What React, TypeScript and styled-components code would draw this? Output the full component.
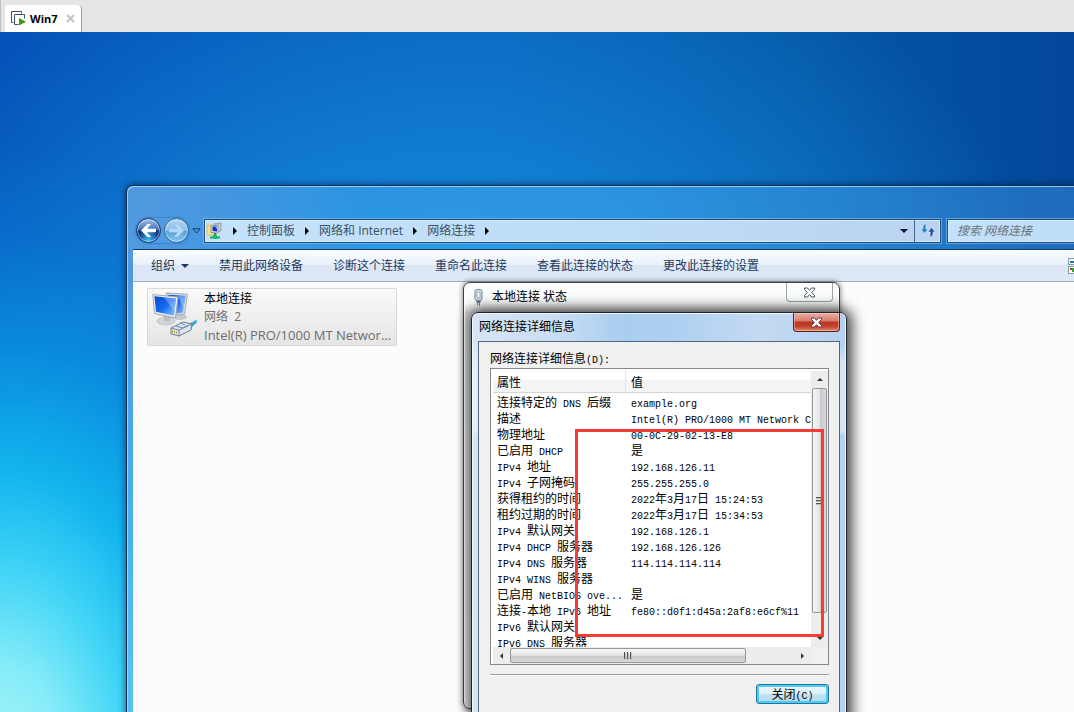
import React from "react";
import styled, { createGlobalStyle, css } from "styled-components";

const UI_FONT = '"Open Sans", "Noto Sans CJK SC", sans-serif';
const LIST_FONT = '"Noto Sans CJK SC", sans-serif';

const GlobalStyle = createGlobalStyle`
  *, *::before, *::after { box-sizing: border-box; }
  body { margin: 0; font: 12px/16px ${UI_FONT}; color: #000; }
  button { font: inherit; color: inherit; padding: 0; border: 0; background: none; cursor: default; }
  h1, h2 { margin: 0; font-size: 12px; font-weight: 400; }
  svg { flex: none; }
`;

const Page = styled.div`
  position: relative;
  display: flex;
  flex-direction: column;
  min-height: 100vh;
  overflow: hidden;
`;

const TabBar = styled.header`
  display: flex;
  align-items: flex-end;
  height: 32px;
  padding-left: 4px;
  background: #e4e5e7;
  border-left: 1px solid #c0c0c2;
`;

const Tab = styled.div`
  display: flex;
  align-items: center;
  height: 27px;
  padding: 0 6px;
  background: #fff;
  border-right: 1px solid #a2a3a5;
  border-radius: 3px 4px 0 0;
  font: bold 11px/16px "Open Sans", sans-serif;
`;

const TabLabel = styled.span`
  margin: 0 8px 0 4px;
`;

const TabClose = styled.button`
  display: flex;
`;

const Desktop = styled.main`
  position: relative;
  flex: 1;
  overflow: hidden;
  background:
    radial-gradient(ellipse 400px 620px at 0% 108%, #a8f5f9 0%, #86ecf8 16%, #40d4f6 32%, rgba(18, 184, 240, 0.95) 48%, rgba(8, 150, 228, 0.7) 68%, rgba(6, 120, 214, 0.35) 86%, rgba(4, 110, 205, 0) 100%),
    radial-gradient(ellipse 640px 480px at 40% 50%, #1d96e6 0%, rgba(20, 136, 218, 0.75) 45%, rgba(8, 100, 190, 0) 100%),
    linear-gradient(90deg, #034eb6 0%, #075cb6 45%, #0557a6 75%, #03479a 100%);
`;

const Explorer = styled.section`
  position: absolute;
  top: 153px;
  left: 126px;
  right: -100px;
  bottom: -40px;
  display: flex;
  flex-direction: column;
  padding: 0 6px;
  border: 1px solid #0c2c4c;
  border-radius: 7px 7px 0 0;
  background: linear-gradient(100deg, rgba(128, 180, 238, 0.6) 0, rgba(118, 178, 238, 0.52) 90px, rgba(66, 168, 240, 0.5) 240px, rgba(70, 170, 240, 0.5) 45%, rgba(50, 130, 210, 0.5) 100%);
  box-shadow: inset 1px 1px 0 rgba(160, 220, 255, 0.85), 0 0 6px 1px rgba(0, 20, 60, 0.55);
`;

const NavBar = styled.nav`
  display: flex;
  align-items: center;
  height: 63px;
  padding: 26px 0 0 3px;
`;

const NavButtons = styled.div`
  display: flex;
  align-items: center;
  gap: 3px;
  border-radius: 14px;
  background: rgba(90, 160, 220, 0.35);
  box-shadow: 0 0 2px rgba(10, 60, 120, 0.7);
`;

const RoundButton = styled.button<{ $active?: boolean }>`
  display: flex;
  align-items: center;
  justify-content: center;
  width: 25px;
  height: 25px;
  border: 1px solid ${(p) => (p.$active ? "#12386e" : "#2f6ca6")};
  border-radius: 50%;
  background: ${(p) =>
    p.$active
      ? "radial-gradient(ellipse at 50% 100%, #3cc0f4 0%, transparent 55%), linear-gradient(#a6c4ea 0%, #476fb4 46%, #0d2f78 52%, #1a5cb4 100%)"
      : "linear-gradient(#b4d6f2 0%, #8cbee6 48%, #5a9fd6 54%, #84caf2 100%)"};
  box-shadow: inset 0 0 0 1px rgba(255, 255, 255, 0.5);
`;

const HistoryButton = styled.button`
  display: flex;
  margin: 0 3px;
`;

const glassField = css`
  display: flex;
  align-items: center;
  height: 24px;
  border: 1px solid #1f4c7c;
  background: linear-gradient(90deg, #c4e2f9, #bfdcf6 60%, #bbd3ee);
  box-shadow: inset 0 0 0 1px rgba(225, 243, 255, 0.7), 0 0 0 1px rgba(130, 195, 245, 0.6);
`;

const AddressBar = styled.div`
  ${glassField}
  flex: 1;
  padding-left: 1px;
  color: #3c5064;
`;

const Crumb = styled.a`
  color: inherit;
  text-decoration: none;
  white-space: nowrap;
`;

const CrumbArrow = styled.span`
  display: flex;
  justify-content: center;
  width: 24px;
`;

const AddressTail = styled.button`
  display: flex;
  align-items: center;
  justify-content: center;
  width: 20px;
  height: 22px;
  margin-left: auto;
`;

const RefreshButton = styled.button`
  display: flex;
  align-items: center;
  justify-content: center;
  width: 26px;
  height: 22px;
  border-left: 1px solid #41688e;
`;

const SearchBox = styled.input`
  ${glassField}
  width: 220px;
  margin-left: 6px;
  padding: 0 9px;
  border-radius: 0;
  font: italic 12px/16px ${UI_FONT};
  outline: none;
  &::placeholder { color: #6b7680; opacity: 1; }
`;

const CommandBar = styled.div`
  display: flex;
  align-items: center;
  gap: 30px;
  height: 33px;
  padding: 0 70px 0 18px;
  border-top: 1px solid #123c66;
  border-bottom: 1px solid #a0afc3;
  background: linear-gradient(#fbfdff 0%, #e8f1fb 47%, #dce6f4 50%, #dde7f5 100%);
  color: #1e395b;
`;

const Command = styled.button`
  display: flex;
  align-items: center;
  gap: 6px;
  white-space: nowrap;
`;

const ViewButton = styled(Command)`
  margin-left: auto;
`;

const FolderView = styled.div`
  flex: 1;
  padding: 6px 14px;
  background: #fcfcfc;
`;

const ConnectionTile = styled.article`
  display: flex;
  gap: 6px;
  width: 250px;
  height: 58px;
  padding: 1px 4px;
  border: 1px solid #d9d9d9;
  border-radius: 2px;
  background: linear-gradient(#f9f9f9, #e5e5e5);
`;

const TileText = styled.div`
  display: flex;
  flex-direction: column;
  line-height: 18px;
  color: #6d6d6d;
  white-space: pre;
`;

const TileName = styled.strong`
  font-weight: 400;
  color: #000;
`;

const TileDevice = styled.span`
  font-size: 13px;
`;

const StatusWindow = styled.section`
  position: absolute;
  top: 250px;
  left: 463px;
  width: 377px;
  height: 427px;
  border: 1px solid #3c4043;
  border-radius: 7px;
  background: linear-gradient(#fdfefe 0, #f8faf9 20px, #d2d5d4 30px, #e3e5e5 100%);
  box-shadow: inset 0 0 0 1px #fff, 0 0 5px 1px rgba(0, 0, 0, 0.4);
`;

const StatusTitle = styled.div`
  display: flex;
  justify-content: space-between;
  padding-left: 10px;
`;

const Caption = styled.h1`
  display: flex;
  align-items: center;
  gap: 9px;
  height: 28px;
`;

const CloseButton = styled.button<{ $red?: boolean }>`
  display: flex;
  align-items: center;
  justify-content: center;
  width: 47px;
  height: 19px;
  margin-right: 6px;
  border: 1px solid ${(p) => (p.$red ? "#5a1f22" : "#9da2a5")};
  border-top: 0;
  border-radius: 0 0 4px 4px;
  ${(p) =>
    p.$red &&
    css`
      background: linear-gradient(#e9b0a4 0%, #d6796a 45%, #bb3320 50%, #c14430 75%, #e08a6c 100%);
      box-shadow: inset 0 0 0 1px rgba(255, 220, 210, 0.45);
    `}
`;

const DetailsWindow = styled.section`
  position: absolute;
  top: 280px;
  left: 471px;
  width: 376px;
  padding: 0 6px 7px;
  border: 1px solid #1c232b;
  border-radius: 7px;
  background:
    linear-gradient(transparent 0, transparent 30px, rgba(236, 243, 250, 0.6) 50px, rgba(236, 243, 250, 0.6) 118px, transparent 122px),
    linear-gradient(90deg, #d7e5f5 0, #c8dcf2 90px, #a8cef0 150px, #aed0f0 200px, #c4daf3 290px, #b4d0ee 100%);
  box-shadow: inset 0 0 0 1px rgba(245, 250, 255, 0.9), 2px 0 14px 3px rgba(0, 0, 0, 0.75);
`;

const DetailsTitle = styled.div`
  display: flex;
  justify-content: space-between;
  height: 28px;
  margin-right: -6px;
  padding-left: 1px;
`;

const DetailsBody = styled.div`
  display: flex;
  flex-direction: column;
  padding: 8px 10px 13px 11px;
  border: 1px solid #55677d;
  background: #f0f0f0;
`;

const ListLabel = styled.h2`
  height: 18px;
  line-height: 18px;
`;

const ListBox = styled.div`
  display: grid;
  grid-template-columns: 1fr 17px;
  grid-template-rows: 276px 17px;
  height: 297px;
  padding: 2px 0 0 2px;
  border: 1px solid #828790;
  background: #fff;
  font-family: ${LIST_FONT};
`;

const TableViewport = styled.div`
  overflow: hidden;
`;

const DetailTable = styled.table`
  width: 100%;
  table-layout: fixed;
  border-collapse: separate;
  border-spacing: 0;

  th {
    height: 22px;
    padding: 0 4px;
    border-bottom: 1px solid #d5d5d5;
    background: linear-gradient(#fff 40%, #f3f4f6 45%, #f3f4f6 100%);
    font-weight: 400;
    text-align: left;
  }
  th:first-child { width: 133px; border-right: 1px solid #e1e3e6; }
  td {
    height: 16px;
    padding: 0 0 0 4px;
    line-height: 16px;
    white-space: pre;
    overflow: hidden;
  }
  td + td, th + th { padding-left: 5px; }
  tbody tr:first-child td { height: 17px; padding-top: 1px; }
`;

/* The short line box keeps a smaller Latin run from making its row taller. */
const Latin = styled.span`
  font: 10px/10px "Liberation Mono", monospace;
`;

const VerticalScroll = styled.div`
  display: flex;
  flex-direction: column;
  align-items: center;
  background: #ededee;
`;

const HorizontalScroll = styled.div`
  display: flex;
  align-items: center;
  background: #ededee;
`;

const ScrollEnd = styled.button`
  display: flex;
  align-items: center;
  justify-content: center;
  width: 17px;
  height: 17px;
`;

const ScrollCorner = styled.div`
  background: #f0f0f0;
`;

const VerticalThumb = styled.div`
  display: flex;
  align-items: center;
  justify-content: center;
  width: 15px;
  height: 225px;
  margin-bottom: auto;
  border: 1px solid #979797;
  border-radius: 2px;
  background: linear-gradient(90deg, #f5f5f5 0%, #e6e6e8 50%, #c9cacd 55%, #d8d8da 100%);
`;

const HorizontalThumb = styled.div`
  display: flex;
  align-items: center;
  justify-content: center;
  width: 236px;
  height: 15px;
  margin-right: auto;
  border: 1px solid #979797;
  border-radius: 2px;
  background: linear-gradient(#f5f5f5 0%, #e6e6e8 48%, #c9cacd 54%, #d8d8da 100%);
`;

const Divider = styled.hr`
  width: 100%;
  height: 2px;
  margin: 9px 0 8px;
  border: 0;
  border-top: 1px solid #a0a0a0;
  border-bottom: 1px solid #fff;
`;

const DefaultButton = styled.button`
  align-self: flex-end;
  width: 73px;
  height: 20px;
  border: 1px solid #2f6f9c;
  border-radius: 3px;
  background: linear-gradient(#eef7fc 0%, #def0f9 48%, #c2e2f3 52%, #b4dbef 100%);
  box-shadow: inset 0 0 0 2px #48cdf5;
  font-family: ${LIST_FONT};
  line-height: 16px;
`;

const Highlight = styled.div`
  position: absolute;
  top: 397px;
  left: 575px;
  width: 249px;
  height: 208px;
  border: 3px solid #f93a37;
  pointer-events: none;
`;

function Mixed({ children }: { children: string }) {
  const runs = children.match(/[\u4e00-\u9fff]+|[^\u4e00-\u9fff]+/g) ?? [];
  return (
    <>
      {runs.map((run, i) => (/[\u4e00-\u9fff]/.test(run) ? run : <Latin key={i}>{run}</Latin>))}
    </>
  );
}

function Triangle({ dir, color = "#000", size = 4 }: { dir: "up" | "down" | "left" | "right"; color?: string; size?: number }) {
  const s = size;
  const shapes = {
    down: `0,0 ${2 * s},0 ${s},${s}`,
    up: `0,${s} ${2 * s},${s} ${s},0`,
    right: `0,0 ${s},${s} 0,${2 * s}`,
    left: `${s},0 0,${s} ${s},${2 * s}`,
  };
  const vertical = dir === "up" || dir === "down";
  return (
    <svg width={vertical ? 2 * s : s} height={vertical ? s : 2 * s} aria-hidden="true">
      <polygon points={shapes[dir]} fill={color} />
    </svg>
  );
}

function Arrow({ flip, faded }: { flip?: boolean; faded?: boolean }) {
  return (
    <svg width="19" height="17" viewBox="0 0 19 17" aria-hidden="true">
      <path
        d={flip ? "M17 8.500 10.500 2H7l4 4.800H2v3.400h9L7 15h3.500z" : "M2 8.500 8.500 2H12L8 6.800h9v3.400H8l4 4.800H8.500z"}
        fill={faded ? "#b4dbf7" : "#fff"}
        stroke={faded ? "#94c6ea" : "none"}
        strokeWidth=".5"
      />
    </svg>
  );
}

function Cross({ light }: { light?: boolean }) {
  return (
    <svg width="13" height="11" viewBox="0 0 13 11" aria-hidden="true">
      <path
        d="M1.500 1h3l2 2.300L8.500 1h3v1.500L8.700 5.500l2.800 3V10h-3l-2-2.300L4.500 10h-3V8.500l2.800-3-2.800-3z"
        fill="#fff"
        stroke={light ? "#6b3a3c" : "#4d5260"}
        strokeLinejoin="round"
      />
    </svg>
  );
}

function Grip({ vertical }: { vertical?: boolean }) {
  return (
    <svg width="8" height="8" viewBox="0 0 8 8" aria-hidden="true">
      <path d={vertical ? "M0 .5h8M0 3.500h8M0 6.500h8" : "M.5 0v7M3.500 0v7M6.500 0v7"} stroke="#555" />
      <path d={vertical ? "M0 1.500h8M0 4.500h8M0 7.500h8" : "M1.500 1v7M4.500 1v7M7.500 1v7"} stroke="#bbb" />
    </svg>
  );
}

function MachineIcon() {
  return (
    <svg width="15" height="15" viewBox="0 0 15 15" fill="none" aria-hidden="true">
      <path d="M2.500 11.500H.5V.5h10v2" stroke="#3d5263" />
      <path d="M7.500 13.500H3.500v-10h10v4" stroke="#3d5263" />
      <path d="M8 7l7 3.800L8 14.500z" fill="#3f9a0a" />
    </svg>
  );
}

function NetworkFolderIcon() {
  return (
    <svg width="17" height="18" viewBox="0 0 17 18" aria-hidden="true">
      <path d="M1 3h5l1 1h3v9H1z" fill="#f1e08c" stroke="#d9bb52" strokeWidth=".8" />
      <path d="M8 2l7-1v8l-7 1z" fill="#c9d2dc" stroke="#7b8797" strokeWidth=".7" />
      <path d="M5 4l7-1v8l-7-.5z" fill="#dfe5ee" stroke="#68758a" strokeWidth=".7" />
      <path d="M6.500 4.800l4.500-.6v5.300l-4.500-.4z" fill="#1d2fc2" />
      <path d="M9 4.500l2-.3v3z" fill="#85a8f2" />
      <path d="M9 11v4M4 15.500h10" stroke="#16a85c" strokeWidth="2" />
      <rect x="7" y="13" width="4" height="4" fill="#10c070" />
    </svg>
  );
}

function ConnectionIcon() {
  return (
    <svg width="46" height="50" viewBox="0 0 46 50" aria-hidden="true">
      <defs>
        <linearGradient id="screen" x1="0" y1="0" x2="1" y2="1">
          <stop offset="0" stopColor="#0a45d0" />
          <stop offset=".5" stopColor="#1668f0" />
          <stop offset="1" stopColor="#8fc8fb" />
        </linearGradient>
      </defs>
      <ellipse cx="28" cy="27" rx="7" ry="3" fill="#c4c8cc" />
      <path d="M14 3l21.500 1.200-3 20-10 1z" fill="#dfe2e5" stroke="#a5a9ad" />
      <path d="M16 4.800l17.500 1-2.500 17-8 1z" fill="url(#screen)" />
      <path d="M26 5.400l7.500.4-2 14z" fill="#fff" opacity=".35" />
      <ellipse cx="14" cy="31" rx="9" ry="4" fill="#d2d5d8" stroke="#aeb2b6" strokeWidth=".6" />
      <path d="M12 25h7l-1 6h-6z" fill="#b9bdc2" />
      <path d="M.8 4.500L26 7l-2.500 21L2.500 23.500z" fill="#eceef0" stroke="#a5a9ad" />
      <path d="M2.500 6.300L24 8.500l-2 17.200L4 21.800z" fill="url(#screen)" />
      <path d="M12 7.300l12 1.200-1.500 13z" fill="#fff" opacity=".3" />
      <path d="M35 35l9.500-5 .5 2-6 6z" fill="#3ba7d6" stroke="#78c3e3" />
      <path d="M19 38l12-6 9 2-1 6-12 6-8-2z" fill="#dbe5ee" stroke="#687c99" />
      <path d="M19 38l8 2v6M27 40l13-6M24 36l7 2 5-3M28 33l5 2" fill="none" stroke="#7088aa" />
      <path d="M20.500 40v3M22.500 40.500v3M24.500 41v3" stroke="#b9a64a" />
    </svg>
  );
}

function PlugIcon() {
  return (
    <svg width="9" height="17" viewBox="0 0 9 17" aria-hidden="true">
      <rect x="1" y=".5" width="7" height="11" rx="2" fill="#d9e2ec" stroke="#76869a" />
      <rect x="3" y="3" width="3" height="6" fill="#f8fbff" stroke="#8494a8" strokeWidth=".8" />
      <path d="M2 12h5l-1 2H3z" fill="#5e7590" />
      <path d="M3.500 13v3M5.500 13v4" stroke="#259ac4" />
    </svg>
  );
}

function RefreshIcon() {
  return (
    <svg width="16" height="15" viewBox="0 0 16 15" aria-hidden="true">
      <path d="M6.500.8C3.500 1 2.500 3.500 2.800 6H.6l3.900 4.500L8.300 6H6C5.700 4 5.800 2.500 6.500.8z" fill="#2187cf" stroke="#eaf6ff" strokeWidth=".6" />
      <path d="M9.500 14.200c3-.2 4-2.700 3.700-5.200h2.200l-3.900-4.500L7.700 9H10c.3 2 .2 3.500-.5 5.200z" fill="#2a55a8" stroke="#eaf6ff" strokeWidth=".6" />
    </svg>
  );
}

function ViewsIcon() {
  return (
    <svg width="29" height="16" viewBox="0 0 29 16" aria-hidden="true">
      <rect x=".5" y=".5" width="9" height="6" fill="#fff" stroke="#8799ad" />
      <path d="M2 3h6v2H2z" fill="#2a78a0" />
      <rect x=".5" y="8.500" width="9" height="7" fill="#fff" stroke="#8799ad" />
      <path d="M2 10h2v2H2z" fill="#d03020" />
      <path d="M4 10h3v4H4z" fill="#35a030" />
    </svg>
  );
}

const crumbs = ["控制面板", "网络和 Internet", "网络连接"];
const commands = ["禁用此网络设备", "诊断这个连接", "重命名此连接", "查看此连接的状态", "更改此连接的设置"];
const details: [string, string][] = [
  ["连接特定的 DNS 后缀", "example.org"],
  ["描述", "Intel(R) PRO/1000 MT Network C"],
  ["物理地址", "00-0C-29-02-13-E8"],
  ["已启用 DHCP", "是"],
  ["IPv4 地址", "192.168.126.11"],
  ["IPv4 子网掩码", "255.255.255.0"],
  ["获得租约的时间", "2022年3月17日 15:24:53"],
  ["租约过期的时间", "2022年3月17日 15:34:53"],
  ["IPv4 默认网关", "192.168.126.1"],
  ["IPv4 DHCP 服务器", "192.168.126.126"],
  ["IPv4 DNS 服务器", "114.114.114.114"],
  ["IPv4 WINS 服务器", ""],
  ["已启用 NetBIOS ove...", "是"],
  ["连接-本地 IPv6 地址", "fe80::d0f1:d45a:2af8:e6cf%11"],
  ["IPv6 默认网关", ""],
  ["IPv6 DNS 服务器", ""],
];

function ExplorerWindow() {
  return (
    <Explorer aria-label="网络连接">
      <NavBar>
        <NavButtons>
          <RoundButton $active aria-label="后退"><Arrow /></RoundButton>
          <RoundButton aria-label="前进"><Arrow flip faded /></RoundButton>
        </NavButtons>
        <HistoryButton aria-label="最近的页面">
          <svg width="9" height="6" aria-hidden="true">
            <path d="M.8.8h7.400L4.500 5z" fill="#4aa0e0" stroke="#12385e" />
          </svg>
        </HistoryButton>
        <AddressBar>
          <NetworkFolderIcon />
          <CrumbArrow><Triangle dir="right" /></CrumbArrow>
          {crumbs.map((name) => (
            <React.Fragment key={name}>
              <Crumb href="#">{name}</Crumb>
              <CrumbArrow><Triangle dir="right" /></CrumbArrow>
            </React.Fragment>
          ))}
          <AddressTail aria-label="以前的位置"><Triangle dir="down" color="#000a40" /></AddressTail>
          <RefreshButton aria-label="刷新"><RefreshIcon /></RefreshButton>
        </AddressBar>
        <SearchBox type="text" aria-label="搜索 网络连接" placeholder="搜索 网络连接" />
      </NavBar>
      <CommandBar>
        <Command>组织 <Triangle dir="down" color="#1e395b" /></Command>
        {commands.map((name) => <Command key={name}>{name}</Command>)}
        <ViewButton aria-label="更改视图"><ViewsIcon /></ViewButton>
      </CommandBar>
      <FolderView>
        <ConnectionTile>
          <ConnectionIcon />
          <TileText>
            <TileName>本地连接</TileName>
            <span>{"网络  2"}</span>
            <TileDevice>Intel(R) PRO/1000 MT Networ...</TileDevice>
          </TileText>
        </ConnectionTile>
      </FolderView>
    </Explorer>
  );
}

function DetailsDialog() {
  return (
    <DetailsWindow role="dialog" aria-label="网络连接详细信息">
      <DetailsTitle>
        <Caption>网络连接详细信息</Caption>
        <CloseButton $red aria-label="关闭"><Cross light /></CloseButton>
      </DetailsTitle>
      <DetailsBody>
        <ListLabel><Mixed>网络连接详细信息(D):</Mixed></ListLabel>
        <ListBox>
          <TableViewport>
            <DetailTable>
              <thead>
                <tr><th scope="col">属性</th><th scope="col">值</th></tr>
              </thead>
              <tbody>
                {details.map(([name, value]) => (
                  <tr key={name}>
                    <td><Mixed>{name}</Mixed></td>
                    <td><Mixed>{value}</Mixed></td>
                  </tr>
                ))}
              </tbody>
            </DetailTable>
          </TableViewport>
          <VerticalScroll>
            <ScrollEnd aria-label="向上滚动"><Triangle dir="up" color="#333" size={3} /></ScrollEnd>
            <VerticalThumb><Grip vertical /></VerticalThumb>
            <ScrollEnd aria-label="向下滚动"><Triangle dir="down" color="#333" size={3} /></ScrollEnd>
          </VerticalScroll>
          <HorizontalScroll>
            <ScrollEnd aria-label="向左滚动"><Triangle dir="left" color="#333" size={3} /></ScrollEnd>
            <HorizontalThumb><Grip /></HorizontalThumb>
            <ScrollEnd aria-label="向右滚动"><Triangle dir="right" color="#333" size={3} /></ScrollEnd>
          </HorizontalScroll>
          <ScrollCorner />
        </ListBox>
        <Divider />
        <DefaultButton><Mixed>关闭(C)</Mixed></DefaultButton>
      </DetailsBody>
    </DetailsWindow>
  );
}

export default function App() {
  return (
    <Page>
      <GlobalStyle />
      <TabBar>
        <Tab>
          <MachineIcon />
          <TabLabel>Win7</TabLabel>
          <TabClose aria-label="关闭标签页">
            <svg width="9" height="9" aria-hidden="true">
              <path d="M1 1l7 7M8 1L1 8" stroke="#c6c6c6" strokeWidth="2.400" />
            </svg>
          </TabClose>
        </Tab>
      </TabBar>
      <Desktop>
        <ExplorerWindow />
        <StatusWindow aria-label="本地连接 状态">
          <StatusTitle>
            <Caption><PlugIcon />本地连接 状态</Caption>
            <CloseButton aria-label="关闭"><Cross /></CloseButton>
          </StatusTitle>
        </StatusWindow>
        <DetailsDialog />
        <Highlight />
      </Desktop>
    </Page>
  );
}
